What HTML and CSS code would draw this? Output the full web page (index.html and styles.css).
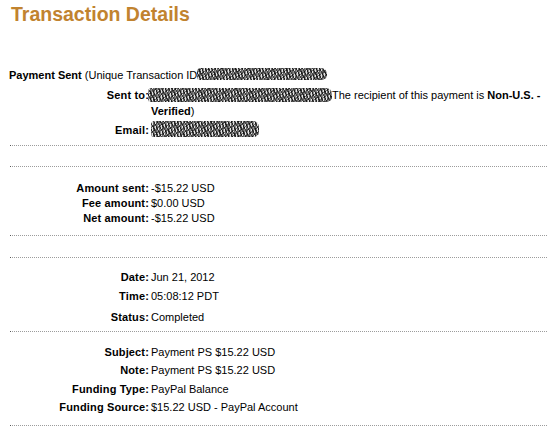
FILE: index.html
```html
<!DOCTYPE html>
<html>
<head>
<meta charset="utf-8">
<title>Transaction Details</title>
<link rel="stylesheet" href="styles.css">
</head>
<body>
<h1 class="title">Transaction Details</h1>
<div class="details">
  <p class="summary"><b>Payment Sent</b> (Unique Transaction ID<span class="redact redact-id"></span></p>

  <div class="section section-head">
    <div class="row row-sent">
      <span class="label">Sent to:</span>
      <span class="value"><span class="redact redact-to"></span>The recipient of this payment is <b class="nowrap">Non-U.S. -</b> <b>Verified</b>)</span>
    </div>
    <div class="row row-email">
      <span class="label">Email:</span>
      <span class="value"><span class="redact redact-email"></span></span>
    </div>
  </div>

  <div class="divider d1"></div>
  <div class="divider d2"></div>

  <div class="section section-amount">
    <div class="row"><span class="label">Amount sent:</span><span class="value">-$15.22 USD</span></div>
    <div class="row gap-1"><span class="label">Fee amount:</span><span class="value">$0.00 USD</span></div>
    <div class="row gap-1"><span class="label">Net amount:</span><span class="value">-$15.22 USD</span></div>
  </div>

  <div class="divider d3"></div>
  <div class="divider d4"></div>

  <div class="section section-date">
    <div class="row"><span class="label">Date:</span><span class="value">Jun 21, 2012</span></div>
    <div class="row gap-5"><span class="label">Time:</span><span class="value">05:08:12 PDT</span></div>
    <div class="row gap-7"><span class="label">Status:</span><span class="value">Completed</span></div>
  </div>

  <div class="divider d5"></div>

  <div class="section section-info">
    <div class="row"><span class="label">Subject:</span><span class="value">Payment PS $15.22 USD</span></div>
    <div class="row gap-4"><span class="label">Note:</span><span class="value">Payment PS $15.22 USD</span></div>
    <div class="row gap-5"><span class="label">Funding Type:</span><span class="value">PayPal Balance</span></div>
    <div class="row gap-4"><span class="label">Funding Source:</span><span class="value">$15.22 USD - PayPal Account</span></div>
  </div>

  <div class="divider d6"></div>
</div>
</body>
</html>
```

FILE: styles.css
```css
html, body {
  margin: 0;
  padding: 0;
  background: #ffffff;
}

body {
  font-family: "Liberation Sans", Arial, sans-serif;
  font-size: 11px;
  color: #000000;
}

.title {
  margin: 3px 0 0 11px;
  font-size: 19.5px;
  line-height: 22px;
  font-weight: bold;
  color: #c1832f;
}

.details {
  margin: 43px 0 0 9px;
  width: 538px;
}

.summary {
  margin: 0;
  line-height: 14px;
}

.row {
  display: flex;
  align-items: baseline;
  line-height: 14px;
}

.label {
  flex: 0 0 140px;
  margin-right: 2px;
  text-align: right;
  font-weight: bold;
  letter-spacing: 0.15px;
}

.value {
  flex: 1 1 auto;
  min-width: 0;
}

.nowrap {
  white-space: nowrap;
}

.section-head {
  margin-top: 5px;
}

.row-sent {
  line-height: 16px;
}

.row-email {
  margin-top: 2px;
}

.gap-1 { margin-top: 1px; }
.gap-4 { margin-top: 4px; }
.gap-5 { margin-top: 5px; }
.gap-7 { margin-top: 7px; }

.divider {
  position: relative;
  margin-left: 1px;
  border-top: 1px dotted #9c9c9c;
}

.divider::before {
  content: "";
  position: absolute;
  left: 0;
  top: -1px;
  width: 1px;
  height: 1px;
  background: #555;
}

.d1 { margin-top: 8px; }
.d2 { margin-top: 20px; }
.d3 { margin-top: 10px; }
.d4 { margin-top: 21px; }
.d5 { margin-top: 7px; }
.d6 { margin-top: 11px; }

.section-amount { margin-top: 14px; }
.section-date { margin-top: 12px; }
.section-info { margin-top: 13px; }

/* scribbled-out private data */
.redact {
  display: inline-block;
  border-radius: 4px 6px 5px 3px;
  background:
    repeating-linear-gradient(63deg, rgba(0,0,0,0.7) 0 1px, transparent 1px 3px),
    repeating-linear-gradient(-37deg, rgba(40,40,40,0.6) 0 1px, transparent 1px 4px),
    repeating-linear-gradient(90deg, #8a8a8a 0 1px, #e2e2e2 1px 2px, #666 2px 3px);
}

.redact-id {
  width: 130px;
  height: 12px;
  vertical-align: -1px;
}

.redact-to {
  width: 184px;
  height: 14px;
  vertical-align: -3px;
  margin-left: -3px;
}

.redact-email {
  width: 108px;
  height: 16px;
  vertical-align: -3px;
}
```
